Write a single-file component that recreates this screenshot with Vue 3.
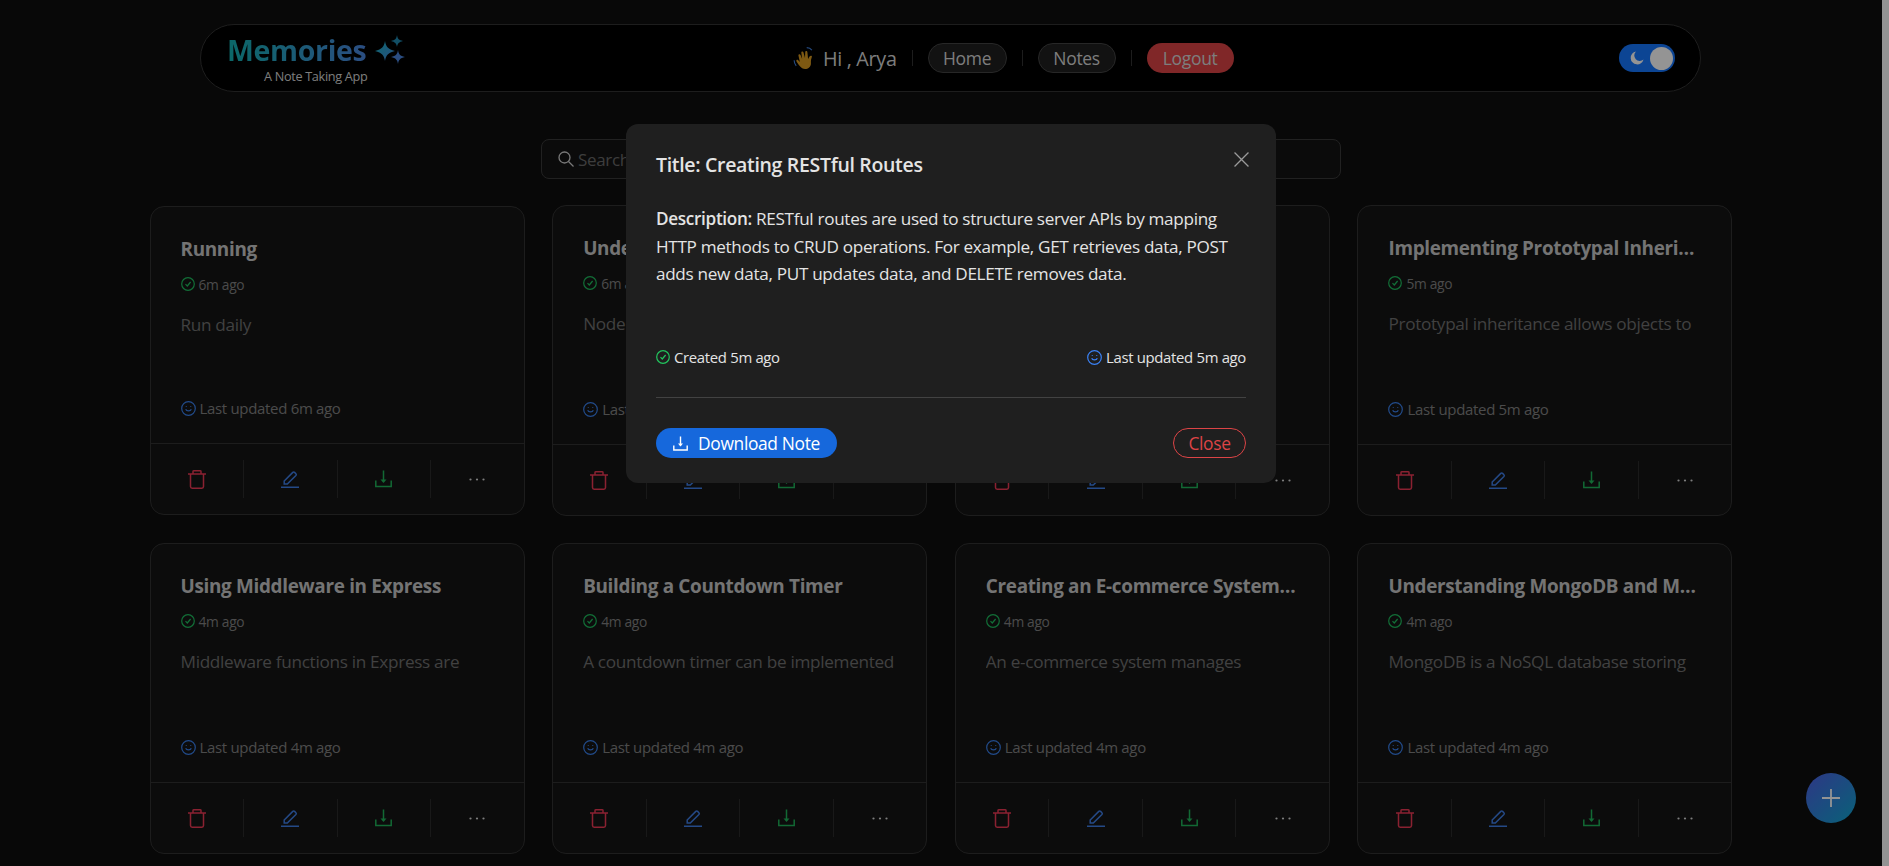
<script setup>
const notes = [
  { title: 'Running', created: '6m ago', desc: 'Run daily', updated: '6m ago', short: true },
  { title: 'Understanding Node.js Streams', created: '6m ago', desc: 'Node.js streams handle data in chunks', updated: '6m ago' },
  { title: 'Creating RESTful Routes', created: '5m ago', desc: 'RESTful routes are used to structure', updated: '5m ago' },
  { title: 'Implementing Prototypal Inheritance in JavaScript', created: '5m ago', desc: 'Prototypal inheritance allows objects to', updated: '5m ago' },
  { title: 'Using Middleware in Express', created: '4m ago', desc: 'Middleware functions in Express are', updated: '4m ago' },
  { title: 'Building a Countdown Timer', created: '4m ago', desc: 'A countdown timer can be implemented', updated: '4m ago' },
  { title: 'Creating an E-commerce System with Node.js', created: '4m ago', desc: 'An e-commerce system manages', updated: '4m ago' },
  { title: 'Understanding MongoDB and Mongoose', created: '4m ago', desc: 'MongoDB is a NoSQL database storing', updated: '4m ago' },
]
</script>

<template>
  <div class="shell">
    <div class="page">
      <nav class="navbar">
        <div class="brand">
          <div class="brand-top">
            <span class="logo">Memories</span>
            <svg class="sparkles" width="30" height="32" viewBox="0 0 30 32">
              <defs>
                <linearGradient id="spark" x1="0" y1="0" x2="1" y2="1">
                  <stop offset="0" stop-color="#14b4c0" />
                  <stop offset="1" stop-color="#4a86e0" />
                </linearGradient>
              </defs>
              <path d="M10 7 C11 13 13 15 20 17 C13 19 11 21 10 27 C9 21 7 19 0 17 C7 15 9 13 10 7Z" fill="url(#spark)" />
              <path d="M22 1 C22.6 5 24 6 28 7 C24 8 22.6 9.500 22 13 C21.400 9.500 20 8 16 7 C20 6 21.400 5 22 1Z" fill="#1f88b0" />
              <path d="M23 16 C23.700 20 25 22 30 23 C25 24 23.700 26 23 30 C22.300 26 21 24 16 23 C21 22 22.300 20 23 16Z" fill="#4a86e0" />
            </svg>
          </div>
          <span class="tagline">A Note Taking App</span>
        </div>

        <div class="menu">
          <span class="greet">
            <svg width="20" height="23" viewBox="0 1.500 17.500 20" class="wave">
              <path d="M8 20c-2-1-4-4-5-6-.6-1 .8-2 1.600-1L6 14.500 4.800 9c-.3-1.200 1.400-1.700 1.800-.5L8 12 7.300 6.500c-.2-1.300 1.600-1.500 1.900-.2L10.500 11l.2-5c0-1.300 1.800-1.300 1.900 0l.6 6c.6-1.500 1.500-3 2.500-3 1-.1 1 1 .6 1.800-.8 1.700-.6 3.200-.6 5 0 4-4.500 6-7.700 4.200Z" fill="#d99a20" />
              <path d="M1 13c0 2 .6 3.500 1.800 5M12 2c2 0 3.500.8 4.500 2.200" fill="none" stroke="#3f7fdc" stroke-width="1" />
            </svg>
            Hi , Arya
          </span>
          <span class="sep"></span>
          <a class="pill">Home</a>
          <span class="sep"></span>
          <a class="pill notes">Notes</a>
          <span class="sep"></span>
          <a class="pill logout">Logout</a>
        </div>

        <div class="toggle">
          <svg width="14" height="14" viewBox="0 0 14 14" class="moon">
            <path d="M6 .5A6.500 6.500 0 1 0 13.500 8.500 4.800 4.800 0 0 1 6 .5Z" fill="#fff" />
          </svg>
          <span class="knob"></span>
        </div>
      </nav>

      <div class="search">
        <svg width="18" height="18" viewBox="0 0 18 18" fill="none" stroke="#d0d0d0" stroke-width="1.300">
          <circle cx="7.500" cy="7.500" r="5.500" />
          <path d="M11.500 11.500 16.500 16.500" />
        </svg>
        <span>Search notes...</span>
      </div>

      <section class="grid">
        <article v-for="note in notes" :key="note.title" class="card" :class="{ short: note.short }">
          <div class="card-body">
            <h3 class="card-title">{{ note.title }}</h3>
            <div class="meta">
              <svg width="14" height="14" viewBox="0 0 14 14" fill="none" stroke="#1fbf5f" stroke-width="1.200">
                <circle cx="7" cy="7" r="6.300" />
                <path d="M4.500 7.200 6.300 9 9.600 5" />
              </svg>
              {{ note.created }}
            </div>
            <p class="desc">{{ note.desc }}</p>
            <div class="meta updated">
              <svg width="15" height="15" viewBox="0 0 15 15" fill="none" stroke="#3a82f0" stroke-width="1.200">
                <circle cx="7.500" cy="7.500" r="6.800" />
                <path d="M4.700 8.300c.8 2.200 4.800 2.200 5.600 0M5.300 5.200v.8M9.700 5.200v.8" />
              </svg>
              Last updated {{ note.updated }}
            </div>
          </div>
          <div class="card-foot">
            <button class="act">
              <svg width="18" height="19" viewBox="0 0 18 19" fill="none" stroke="#ee3a55" stroke-width="1.500">
                <path d="M0 4h18M5 4V1.500C5 1 5.500 .8 6 .8h6c.5 0 1 .2 1 .7V4M2.500 4v12.500c0 1 .8 1.700 1.700 1.700h9.600c1 0 1.700-.7 1.700-1.700V4" />
              </svg>
            </button>
            <button class="act">
              <svg width="18" height="18" viewBox="0 0 18 18" fill="none" stroke="#3f7fe8" stroke-width="1.500">
                <path d="M0 17.200h18M3.200 14v-3L11.800 2.400a1.300 1.300 0 0 1 1.800 0l1.300 1.300a1.300 1.300 0 0 1 0 1.800L6.300 14Z" />
              </svg>
            </button>
            <button class="act">
              <svg width="17" height="18" viewBox="0 0 17 18" fill="none" stroke="#1fb55a" stroke-width="1.500">
                <path d="M8.500 .5v11M.8 10.500v6h15.400v-6" />
                <path d="M5.500 9.500h6l-3 3.500Z" fill="#1fb55a" stroke="none" />
              </svg>
            </button>
            <button class="act">
              <svg width="16" height="3" viewBox="0 0 16 3" fill="#d8d8d8">
                <circle cx="1.500" cy="1.500" r="1.100" />
                <circle cx="8" cy="1.500" r="1.100" />
                <circle cx="14.500" cy="1.500" r="1.100" />
              </svg>
            </button>
          </div>
        </article>
      </section>

      <button class="fab">
        <svg width="18" height="18" viewBox="0 0 18 18" stroke="#fff" stroke-width="1.800">
          <path d="M9 0v18M0 9h18" />
        </svg>
      </button>

      <div class="backdrop">
        <div class="modal">
          <div class="modal-head">
            <h2>Title: Creating RESTful Routes</h2>
            <svg width="15" height="15" viewBox="0 0 14 14" stroke="#9a9a9a" stroke-width="1.200">
              <path d="M.5 .5 13.500 13.500M13.500 .5 .5 13.500" />
            </svg>
          </div>
          <p class="modal-desc">
            <strong>Description:</strong> RESTful routes are used to structure server APIs by mapping HTTP methods to CRUD operations. For example, GET retrieves data, POST adds new data, PUT updates data, and DELETE removes data.
          </p>
          <div class="modal-meta">
            <span>
              <svg width="14" height="14" viewBox="0 0 14 14" fill="none" stroke="#22c55e" stroke-width="1.200">
                <circle cx="7" cy="7" r="6.300" />
                <path d="M4.500 7.200 6.300 9 9.600 5" />
              </svg>
              Created 5m ago
            </span>
            <span>
              <svg width="15" height="15" viewBox="0 0 15 15" fill="none" stroke="#3b82f6" stroke-width="1.200">
                <circle cx="7.500" cy="7.500" r="6.800" />
                <path d="M4.700 8.300c.8 2.200 4.800 2.200 5.600 0M5.300 5.200v.8M9.700 5.200v.8" />
              </svg>
              Last updated 5m ago
            </span>
          </div>
          <div class="modal-foot">
            <button class="download">
              <svg width="15" height="15" viewBox="0 0 15 15" fill="none" stroke="#fff" stroke-width="1.400">
                <path d="M7.500 .5v9M.8 9.500v4.500h13.400V9.500" />
                <path d="M5 7.500h5l-2.500 3Z" fill="#fff" stroke="none" />
              </svg>
              Download Note
            </button>
            <button class="close">Close</button>
          </div>
        </div>
      </div>
    </div>
    <div class="scrollbar"></div>
  </div>
</template>

<style scoped>
.shell { display: flex; height: 866px; overflow: hidden; font-family: "Open Sans", "Noto Sans", sans-serif; letter-spacing: -0.02em; }
.page { flex: 1; position: relative; background: #0e0e0e; padding-top: 24px; min-width: 0; }
.scrollbar { width: 7px; background: #939393; }

.navbar { width: 1501px; height: 68px; box-sizing: border-box; margin-left: 200px; background: #000; border: 1px solid #333; border-radius: 34px; display: flex; align-items: center; padding: 0 25px 0 26px; position: relative; }
.brand { display: flex; flex-direction: column; width: 566px; }
.brand-top { display: flex; align-items: center; gap: 9px; height: 36px; }
.logo { font-size: 28.500px; font-weight: 700; line-height: 36px; background: linear-gradient(90deg, #14b4b4, #4a86e0); -webkit-background-clip: text; background-clip: text; color: transparent; }
.tagline { font-size: 12.700px; color: #d8d8d8; margin-left: 37px; line-height: 16px; }
.menu { display: flex; align-items: center; gap: 15px; }
.greet { display: flex; align-items: center; gap: 10px; font-size: 19.800px; color: #d8d8d8; }
.sep { width: 1px; height: 16px; background: #333; }
.pill { height: 30px; box-sizing: border-box; display: flex; align-items: center; justify-content: center; width: 79px; border-radius: 15px; background: #1f1f1f; border: 1px solid #444; color: #d8d8d8; font-size: 17.500px; }
.notes { width: 78px; }
.logout { width: 87px; background: #dc4446; border: none; }
.toggle { margin-left: auto; width: 56px; height: 28px; border-radius: 14px; background: #1677ff; display: flex; align-items: center; box-sizing: border-box; padding: 0 2px 0 11px; justify-content: space-between; }
.knob { width: 23px; height: 23px; border-radius: 50%; background: #fff; }

.search { width: 800px; height: 40px; box-sizing: border-box; margin: 47px auto 0; border: 1px solid #3a3a3a; border-radius: 8px; background: #141414; display: flex; align-items: center; gap: 3px; padding-left: 15px; color: #6a6a6a; font-size: 17px; }

.grid { width: 1583px; margin: 26px auto 0; display: grid; grid-template-columns: repeat(4, 375px); justify-content: space-between; row-gap: 27px; align-items: center; }
.card { background: #161616; border: 1px solid #323232; border-radius: 14px; box-sizing: border-box; display: flex; flex-direction: column; }
.card-body { height: 238px; box-sizing: border-box; padding: 29px 30px 25px 30px; display: flex; flex-direction: column; }
.short .card-body { height: 236px; }
.card-title { margin: 0; font-size: 18.900px; font-weight: 700; line-height: 26px; color: #c8c8c8; white-space: nowrap; overflow: hidden; text-overflow: ellipsis; }
.meta { display: flex; align-items: center; gap: 4px; font-size: 13.800px; color: #828282; height: 20px; margin-top: 12px; }
.desc { margin: 19px 0 0; font-size: 17.200px; line-height: 24px; color: #707070; white-space: nowrap; overflow: hidden; }
.updated { margin-top: auto; font-size: 15px; }
.card-foot { height: 71px; box-sizing: border-box; border-top: 1px solid #323232; padding: 16px 0; display: flex; }
.act { flex: 1; background: none; border: none; border-right: 1px solid #2c2c2c; padding: 0; display: flex; align-items: center; justify-content: center; }
.act:last-child { border-right: none; }

.fab { position: absolute; left: 1806px; top: 773px; width: 50px; height: 50px; border: none; border-radius: 50%; background: linear-gradient(135deg, #4f5fe6, #10a8d0); display: flex; align-items: center; justify-content: center; padding: 0; }

.backdrop { position: absolute; inset: 0; background: rgba(0, 0, 0, 0.42); }
.modal { position: absolute; left: 626px; top: 124px; width: 650px; height: 359px; box-sizing: border-box; background: #1f1f1f; border-radius: 12px; padding: 28px 30px 0 30px; color: #e4e4e4; }
.modal-head { display: flex; justify-content: space-between; align-items: flex-start; }
.modal-head h2 { margin: 0; font-size: 19.500px; font-weight: 600; line-height: 26px; }
.modal-head svg { margin: 0 -3px 0 0; }
.modal-desc { margin: 27px 0 0; font-size: 17.150px; line-height: 27.500px; height: 110px; }
.modal-desc strong { font-weight: 600; }
.modal-meta { display: flex; justify-content: space-between; font-size: 14.900px; margin-top: 30px; height: 24px; align-items: center; }
.modal-meta span { display: flex; align-items: center; gap: 4px; }
.modal-foot { border-top: 1px solid #424242; margin-top: 28px; padding-top: 30px; display: flex; justify-content: space-between; }
.download { width: 181px; height: 30px; border: none; border-radius: 15px; background: #1668dc; color: #fff; font: inherit; font-size: 17.400px; letter-spacing: -0.02em; display: flex; align-items: center; justify-content: center; gap: 10px; padding: 0; }
.close { width: 73px; height: 30px; border: 1px solid #dc4446; border-radius: 15px; background: transparent; color: #dc4446; font: inherit; font-size: 17.400px; letter-spacing: -0.02em; padding: 0; }
</style>
